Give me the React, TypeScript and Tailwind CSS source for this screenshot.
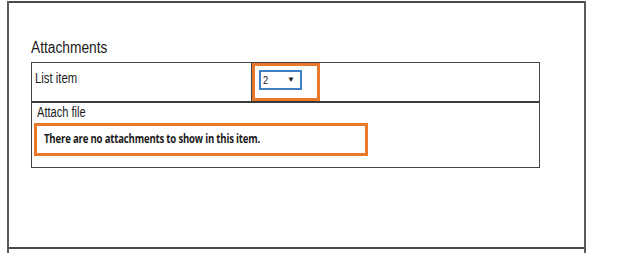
export default function App() {
  return (
    <div className="h-[253px] w-[617px] overflow-hidden bg-white font-['Liberation_Sans',Arial,sans-serif] text-[#1a1a1a]">
      <div className="ml-[7px] h-full w-[579px] border-x-2 border-[#5a5a5a]">
        <div className="mt-[1px] h-[248px] border-y-2 border-[#4a4a4a] pl-[22px]">
          {/* Heading */}
          <h2 className="mt-[37px] mb-[6px] text-[16px] leading-[16px]">
            <span className="inline-block origin-left scale-x-[0.86] whitespace-nowrap">Attachments</span>
          </h2>

          {/* Attachments table */}
          <div className="w-[509px] border border-[#444]">
            <div className="grid h-[40px] grid-cols-[220px_1fr] border-b-2 border-[#3a3a3a]">
              <div className="border-r border-[#444] pl-[3px] pt-[7px] text-[14px] leading-[16px]">
                <span className="inline-block origin-left scale-x-[0.81] whitespace-nowrap">List item</span>
              </div>
              <div>
                <div className="h-[38px] w-[68px] border-[3px] border-[#e8782a] pl-[4px] pt-[4px]">
                  <div className="flex h-[20px] w-[43px] items-center justify-between border-2 border-[#3f7fc4] pl-[2px] pr-[5px] text-[11px] leading-none">
                    <span className="inline-block origin-left scale-x-[0.85]">2</span>
                    <span className="text-[8px]">▼</span>
                  </div>
                </div>
              </div>
            </div>
            <div className="h-[64px] pl-[2px] pt-[1px]">
              <div className="pl-[3px] text-[14px] leading-[16px]">
                <span className="inline-block origin-left scale-x-[0.79] whitespace-nowrap">Attach file</span>
              </div>
              <div className="mt-[3px] h-[33px] w-[334px] border-[3px] border-[#e8782a] pl-[7px] pt-[6px] font-['Open_Sans','Liberation_Sans',sans-serif] text-[12px] leading-[14px] font-bold">
                <span className="inline-block origin-left scale-x-[0.8] whitespace-nowrap tracking-[-0.02em]">
                  There are no attachments to show in this item.
                </span>
              </div>
            </div>
          </div>
        </div>
      </div>
    </div>
  );
}
